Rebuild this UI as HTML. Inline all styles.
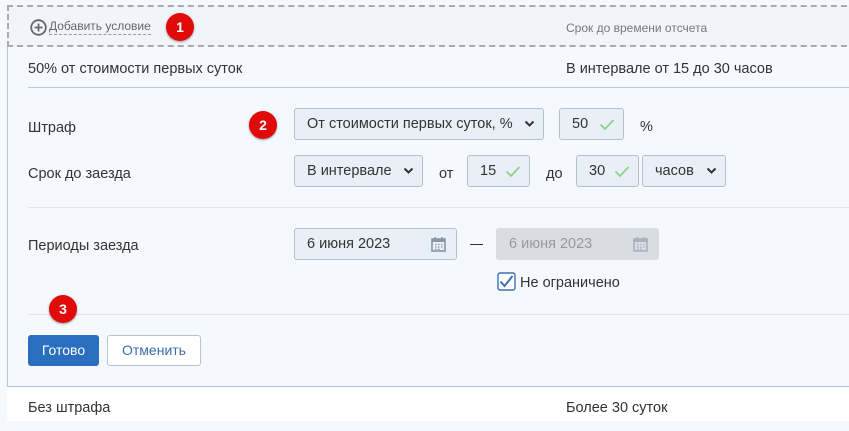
<!DOCTYPE html>
<html><head><meta charset="utf-8"><style>
*{box-sizing:border-box;margin:0;padding:0}
body{width:849px;height:431px;overflow:hidden;background:#f5f8fc;font-family:"Liberation Sans",sans-serif;color:#333;position:relative;font-size:14.5px}
.a{position:absolute;white-space:nowrap}
.t{line-height:18px;transform:translateY(-8px)}
.badge{position:absolute;z-index:5;width:28px;height:28px;border-radius:50%;background:#e10a0a;color:#fff;font-weight:bold;font-size:14px;text-align:center;line-height:28px;box-shadow:0 1px 2px rgba(0,0,0,.4)}
.sel,.inp{position:absolute;height:32px;background:#e9eff7;border:1px solid #b5bfcb;border-radius:3px;line-height:31px;padding-left:12px;color:#333}
.chev{position:absolute;right:8px;top:11px}
.chk{position:absolute;right:8px;top:9px}
.cal{position:absolute;right:10px;top:7px}
</style></head><body>
<div class="a" style="left:7px;top:5px;width:860px;height:42px;border:2px dashed #aaa;background:#f1f4f9"></div>
<svg class="a" style="left:30px;top:19px" width="17" height="17" viewBox="0 0 17 17"><circle cx="8.5" cy="8.5" r="7.3" fill="none" stroke="#666" stroke-width="1.8"/><path d="M8.5 4.5v8M4.5 8.5h8" stroke="#666" stroke-width="1.8"/></svg>
<div class="a t" style="left:49px;top:27px;font-size:12px;color:#666;border-bottom:1px dashed #999;line-height:15px">Добавить условие</div>
<div class="badge" style="left:166px;top:13px">1</div>
<div class="a t" style="left:566px;top:27px;font-size:12px;color:#777">Срок до времени отсчета</div>
<div class="a" style="left:7px;top:47px;width:1px;height:340px;background:#b8c8dc"></div>
<div class="a t" style="left:28px;top:68px">50% от стоимости первых суток</div>
<div class="a t" style="left:566px;top:68px">В интервале от 15 до 30 часов</div>
<div class="a" style="left:28px;top:87px;width:830px;height:1px;background:#b7c7dc"></div>

<div class="a t" style="left:28px;top:127px">Штраф</div>
<div class="badge" style="left:249px;top:111px">2</div>
<div class="sel" style="left:294px;top:108px;width:250px">От стоимости первых суток, %<svg class="chev" width="11" height="8" viewBox="0 0 11 8"><path d="M1.5 1.5l4 4 4-4" fill="none" stroke="#333" stroke-width="2"/></svg></div>
<div class="inp" style="left:559px;top:108px;width:65px">50<svg class="chk" width="16" height="13" viewBox="0 0 16 13"><path d="M1.5 6.5l4.5 4.5 8.5-9" fill="none" stroke="#8fd08a" stroke-width="1.8"/></svg></div>
<div class="a t" style="left:640px;top:126px">%</div>

<div class="a t" style="left:28px;top:173px">Срок до заезда</div>
<div class="sel" style="left:294px;top:155px;width:129px">В интервале<svg class="chev" width="11" height="8" viewBox="0 0 11 8"><path d="M1.5 1.5l4 4 4-4" fill="none" stroke="#333" stroke-width="2"/></svg></div>
<div class="a t" style="left:439px;top:173px">от</div>
<div class="inp" style="left:467px;top:155px;width:63px">15<svg class="chk" width="16" height="13" viewBox="0 0 16 13"><path d="M1.5 6.5l4.5 4.5 8.5-9" fill="none" stroke="#8fd08a" stroke-width="1.8"/></svg></div>
<div class="a t" style="left:546px;top:173px">до</div>
<div class="inp" style="left:576px;top:155px;width:63px">30<svg class="chk" width="16" height="13" viewBox="0 0 16 13"><path d="M1.5 6.5l4.5 4.5 8.5-9" fill="none" stroke="#8fd08a" stroke-width="1.8"/></svg></div>
<div class="sel" style="left:642px;top:155px;width:84px">часов<svg class="chev" width="11" height="8" viewBox="0 0 11 8"><path d="M1.5 1.5l4 4 4-4" fill="none" stroke="#333" stroke-width="2"/></svg></div>
<div class="a" style="left:28px;top:207px;width:830px;height:1px;background:#dde4ec"></div>

<div class="a t" style="left:28px;top:245px">Периоды заезда</div>
<div class="inp" style="left:294px;top:228px;width:163px">6 июня 2023<svg class="cal" width="15" height="16" viewBox="0 0 15 16"><rect x="1" y="3" width="13" height="12" fill="none" stroke="#8a96a6" stroke-width="1.6"/><rect x="1" y="3" width="13" height="3" fill="#8a96a6"/><path d="M4 1v3M11 1v3" stroke="#8a96a6" stroke-width="1.6"/><path d="M4 8.5h1.5M7 8.5h1.5M10 8.5h1.5M4 11h1.5M7 11h1.5M10 11h1.5M4 13.3h1.5M7 13.3h1.5" stroke="#8a96a6" stroke-width="1.3"/></svg></div>
<div class="a" style="left:470px;top:244px;width:13px;height:1px;background:#333"></div>
<div class="inp" style="left:496px;top:228px;width:163px;background:#d9dde3;border-color:#d9dde3;color:#999">6 июня 2023<svg class="cal" width="15" height="16" viewBox="0 0 15 16"><rect x="1" y="3" width="13" height="12" fill="none" stroke="#aab2bd" stroke-width="1.6"/><rect x="1" y="3" width="13" height="3" fill="#aab2bd"/><path d="M4 1v3M11 1v3" stroke="#aab2bd" stroke-width="1.6"/><path d="M4 8.5h1.5M7 8.5h1.5M10 8.5h1.5M4 11h1.5M7 11h1.5M10 11h1.5M4 13.3h1.5M7 13.3h1.5" stroke="#aab2bd" stroke-width="1.3"/></svg></div>
<svg class="a" style="left:497px;top:272px" width="19" height="19" viewBox="0 0 19 19"><rect x="1" y="1" width="17" height="17" rx="2" fill="#fff" stroke="#3a73b5" stroke-width="1.4"/><path d="M3.5 9.5l4 4.5 8-10" fill="none" stroke="#3a73b5" stroke-width="2"/></svg>
<div class="a t" style="left:520px;top:282px">Не ограничено</div>

<div class="a" style="left:28px;top:314px;width:830px;height:1px;background:#dde4ec"></div>
<div class="badge" style="left:49px;top:295px">3</div>
<div class="a" style="left:28px;top:335px;width:71px;height:31px;background:#2a6ebf;border-radius:3px;color:#fff;text-align:center;line-height:31px;font-size:14px">Готово</div>
<div class="a" style="left:107px;top:335px;width:94px;height:31px;background:#fff;border:1px solid #b8c2ce;border-radius:3px;color:#3a6ea8;text-align:center;line-height:29px;font-size:14px">Отменить</div>

<div class="a" style="left:7px;top:386px;width:850px;height:35px;background:#fff;border-top:1px solid #a9c4e6"></div>
<div class="a t" style="left:28px;top:407px">Без штрафа</div>
<div class="a t" style="left:566px;top:407px">Более 30 суток</div>
</body></html>
